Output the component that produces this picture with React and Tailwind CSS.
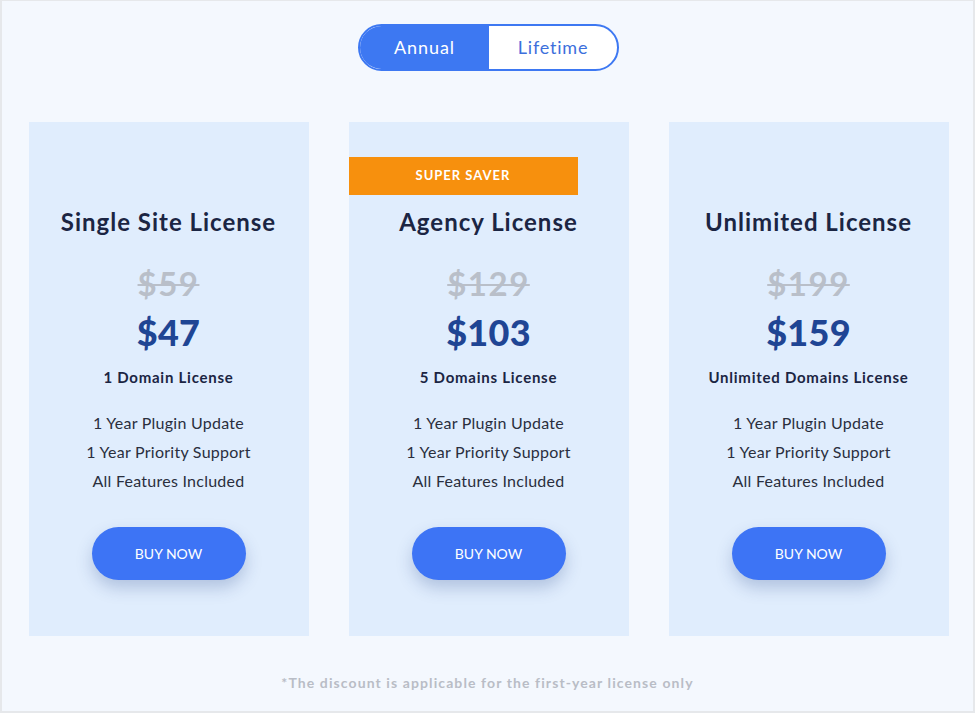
import React from "react";

const plans = [
  { title: "Single Site License", old: "$59", price: "$47", domains: "1 Domain License" },
  { title: "Agency License", old: "$129", price: "$103", domains: "5 Domains License", badge: true },
  { title: "Unlimited License", old: "$199", price: "$159", domains: "Unlimited Domains License" },
];

const features = ["1 Year Plugin Update", "1 Year Priority Support", "All Features Included"];

export default function App() {
  return (
    <div
      className="w-[975px] h-[713px] bg-[#f4f8fe] border-[2px] border-[#e6e8eb] border-t-[1px] flex flex-col items-center"
      style={{ fontFamily: "Lato, 'Noto Sans', sans-serif" }}
    >
      <div className="mt-[23px] ml-[2px] flex w-[261px] h-[47px] rounded-full border-2 border-[#3d78f2] overflow-hidden bg-white">
        <div className="w-[129px] flex items-center justify-center bg-[#3d78f2] text-white text-[18px] tracking-[0.9px]">Annual</div>
        <div className="flex-1 flex items-center justify-center text-[#3d6fdc] text-[18px] tracking-[0.8px]">Lifetime</div>
      </div>
      <div className="mt-[51px] flex gap-[40px] ml-[2px]">
        {plans.map((p) => (
          <div key={p.title} className="relative w-[280px] h-[514px] bg-[#e0edfd] flex flex-col items-center pt-[84px]">
            {p.badge && (
              <div className="absolute left-0 top-[35px] w-[229px] h-[38px] bg-[#f7900d] text-white text-[13px] font-bold flex items-center justify-center tracking-[1px]">
                SUPER SAVER
              </div>
            )}
            <div className="text-[24px] leading-[32px] font-bold text-[#1b2543] tracking-[1px]">{p.title}</div>
            <div className="mt-[25px] text-[33px] leading-[40px] font-bold text-[#b9bfc9] line-through decoration-[2px] tracking-[1.5px]">{p.old}</div>
            <div className="mt-[7px] text-[36px] leading-[44px] font-black text-[#1f4594] tracking-[0.3px]">{p.price}</div>
            <div className="mt-[12px] text-[15px] leading-[22px] font-bold text-[#1b2543] tracking-[0.75px]">{p.domains}</div>
            <div className="mt-[20px] flex flex-col items-center text-[16px] leading-[29px] text-[#2a2f3d] tracking-[0.25px]">
              {features.map((f) => (
                <div key={f}>{f}</div>
              ))}
            </div>
            <div className="mt-[32px] w-[154px] h-[53px] rounded-full bg-[#3d74f5] text-white text-[14px] flex items-center justify-center shadow-[0_8px_16px_rgba(40,70,140,0.25)]">
              BUY NOW
            </div>
          </div>
        ))}
      </div>
      <div className="mt-[36px] text-[14px] font-bold text-[#b9bdc6] tracking-[1.1px]">
        *The discount is applicable for the first-year license only
      </div>
    </div>
  );
}
